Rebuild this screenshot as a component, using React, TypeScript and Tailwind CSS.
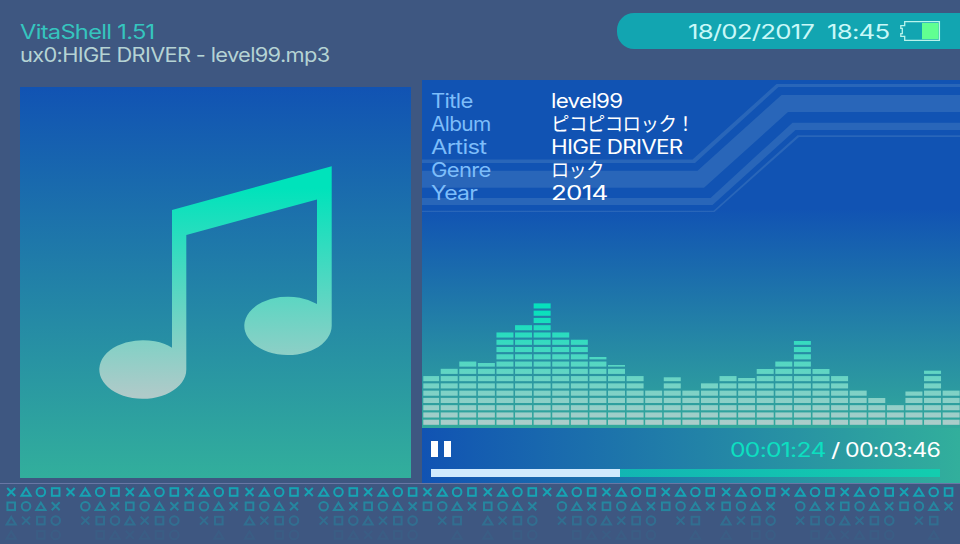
import { useLayoutEffect, useRef, useState } from "react";

/** Single line of text stretched horizontally to an exact width. */
function Wide({ children, width, className = "" }: { children: string; width: number; className?: string }) {
  const ref = useRef<HTMLSpanElement>(null);
  const [scale, setScale] = useState(1);
  useLayoutEffect(() => {
    if (ref.current) setScale(width / ref.current.offsetWidth);
  }, [width, children]);
  return (
    <div className={`flex h-[23px] ${className}`} style={{ width }}>
      <span
        ref={ref}
        className="shrink-0 origin-left whitespace-pre text-[19.5px] leading-[23px] tracking-[-0.6px]"
        style={{ transform: `scaleX(${scale})` }}
      >
        {children}
      </span>
    </div>
  );
}

const tags: { label: string; lw: number; value: string; vw: number }[] = [
  { label: "Title", lw: 42, value: "level99", vw: 71 },
  { label: "Album", lw: 60, value: "ピコピコロック！", vw: 143 },
  { label: "Artist", lw: 55, value: "HIGE DRIVER", vw: 131 },
  { label: "Genre", lw: 60, value: "ロック", vw: 53 },
  { label: "Year", lw: 46, value: "2014", vw: 56 },
];

const barTops = [
  376, 368.7, 361, 363, 332, 325, 303.3, 332, 339.7, 357, 365, 376, 390.3, 377.3, 390.3, 383.3, 376, 378, 369, 361.3,
  341, 369, 376, 390, 398, 405, 391.5, 370.7, 390,
];

function Spectrum() {
  const segments = [];
  for (let i = 0; i < barTops.length; i++) {
    const x = i === 0 ? 423.3 : 422.1 + 18.59 * i;
    const w = i === 0 ? 15.8 : 17;
    for (let k = 0; k < 18; k++) {
      const bottom = 424.8 - k * 7.27;
      const top = Math.max(bottom - 5.1, barTops[i]);
      if (bottom - top > 0.5) {
        segments.push(<rect key={`${i}-${k}`} x={x} y={top} width={w} height={bottom - top} fill="url(#spectrum)" />);
      }
    }
  }
  return (
    <svg className="block h-[136px] w-[538px]" viewBox="422 292 538 136">
      <defs>
        <linearGradient id="spectrum" gradientUnits="userSpaceOnUse" x1="0" y1="310" x2="0" y2="425">
          <stop offset="0" stopColor="#07e0bc" />
          <stop offset="1" stopColor="#aeccca" />
        </linearGradient>
      </defs>
      {segments}
    </svg>
  );
}

function Note() {
  return (
    <svg className="block h-[391px] w-[391px]" viewBox="20 87 391 391">
      <defs>
        <linearGradient id="note" gradientUnits="userSpaceOnUse" x1="0" y1="188" x2="0" y2="396">
          <stop offset="0" stopColor="#00e3bb" />
          <stop offset="1" stopColor="#b0cac9" />
        </linearGradient>
      </defs>
      <path
        fill="url(#note)"
        d="M172 210 L331.7 166.3 V325.8 A43.7 29.2 0 1 1 317 304 V199.5 L186.3 235 V369.3 A43.5 29.3 0 1 1 172 347.8 Z"
      />
    </svg>
  );
}

const rows = ["XTOSXTOSXTOSXTOS", "SOTX OTXSOTXSOTX", "TXSO XSOTXSO XS ", "T SO  STXTSO  T "];
const rowOpacity = [0.95, 0.58, 0.29, 0.07];

function Glyph({ kind, x, y }: { kind: string; x: number; y: number }) {
  if (kind === "X") return <path d={`M${x - 4} ${y - 4}l8 8m0 -8l-8 8`} />;
  if (kind === "T") return <path d={`M${x} ${y - 3.6}L${x + 4.6} ${y + 3.8}H${x - 4.6}Z`} />;
  if (kind === "O") return <circle cx={x} cy={y} r={4.3} />;
  if (kind === "S") return <rect x={x - 3.8} y={y - 3.8} width={7.6} height={7.6} />;
  return null;
}

function Footer() {
  return (
    <svg className="block h-[60px] w-[960px]" viewBox="0 484 960 60" fill="none" stroke="#15a8b6" strokeWidth="2">
      {rows.map((row, r) => (
        <g key={r} opacity={rowOpacity[r]}>
          {[0, 1, 2, 3].map((tile) =>
            row
              .split("")
              .map((kind, i) => (
                <Glyph key={`${tile}-${i}`} kind={kind} x={11.2 + tile * 238.3 + i * 14.83} y={492 + r * 14.3} />
              )),
          )}
        </g>
      ))}
    </svg>
  );
}

export default function App() {
  return (
    <div className="flex h-[544px] w-[960px] flex-col overflow-hidden bg-[#3e5781] font-['Inter','Noto_Sans_CJK_JP',sans-serif]">
      <header className="flex h-20 justify-between">
        <div className="pt-[21px] pl-5">
          <Wide width={135} className="text-[#35c5bf]">VitaShell 1.51</Wide>
          <Wide width={309} className="text-[#b5d3d4]">ux0:HIGE DRIVER - level99.mp3</Wide>
        </div>
        <div className="mt-[13px] flex h-[35.5px] w-[343px] justify-end rounded-l-[17px] bg-[#12a5b1] pt-[7px] pr-[19px]">
          <Wide width={201} className="pt-px text-[#c9f8f8]">18/02/2017  18:45</Wide>
          <svg className="ml-[11px] h-[22px] w-[41px]" viewBox="900 20 41 22">
            <path
              d="M904.7 21.6H939.4V40.4H904.7V36.3H900.8V33.7H902.3V28.3H900.8V25.7H904.7Z"
              fill="none"
              stroke="#b9f4ec"
              strokeWidth="1.3"
            />
            <rect x="922" y="23" width="16.6" height="16.2" fill="#61ff91" />
          </svg>
        </div>
      </header>

      <div className="flex h-[403px]">
        <div className="mt-[7px] ml-5 h-[391px] w-[391px] bg-linear-to-b/srgb from-[#1153b3] to-[#32af9c]">
          <Note />
        </div>
        <div className="ml-[11px] flex w-[538px] flex-col">
          <div className="relative flex h-[348px] flex-col justify-between bg-linear-to-b/srgb from-[#1153b3] from-[37%] to-[#32a99c]">
            <svg className="absolute top-0 left-0 h-[134px] w-[538px]" viewBox="422 80 538 134" fill="#2966b9">
              <path d="M422 159.5H692.5L776.5 84H960V87H778.5L695 163H422Z" />
              <path d="M422 170.7H697.5L781.5 95H960V112H788L704 187.7H422Z" />
              <path d="M422 198H710.5L792.5 122.7H960V130H795.5L712.5 205H422Z" />
              <path d="M422 210.7H713.5L797.5 135.2H960V136.9H799L714.5 212H422Z" />
            </svg>
            <div className="relative pt-[10px] pl-[9px]">
              {tags.map((t) => (
                <div key={t.label} className="flex">
                  <div className="w-[120px]">
                    <Wide width={t.lw} className="text-[#7dbdfa]">{t.label}</Wide>
                  </div>
                  <Wide width={t.vw} className="text-white">{t.value}</Wide>
                </div>
              ))}
            </div>
            <Spectrum />
          </div>
          <div className="h-[55px] bg-linear-to-r/srgb from-[#1153b3] to-[#32af9c] pr-5 pl-[9px]">
            <div className="flex h-[41px] justify-between">
              <div className="flex gap-[6px] pt-[13px]">
                <div className="h-4 w-[7px] bg-white" />
                <div className="h-4 w-[7px] bg-white" />
              </div>
              <div className="flex pt-[11px] text-white">
                <Wide width={95} className="text-[#0ddfc0]">00:01:24</Wide>
                <Wide width={8} className="ml-[6px]">/</Wide>
                <Wide width={95} className="ml-[6px]">00:03:46</Wide>
              </div>
            </div>
            <div className="h-2 bg-linear-to-r/srgb from-[#12a8b5] to-[#13cdaf]">
              <div className="h-2 w-[189px] bg-[#d0eafd]" />
            </div>
          </div>
        </div>
      </div>
      <div className="h-px bg-[#6877a5]" />
      <Footer />
    </div>
  );
}
